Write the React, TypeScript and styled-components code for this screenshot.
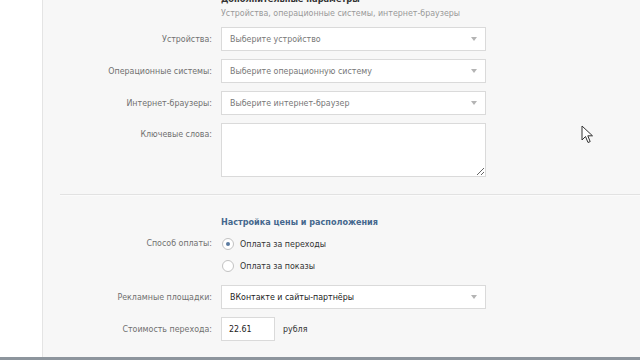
import React, { FC } from 'react';
import styled, { createGlobalStyle } from 'styled-components';

const GlobalStyle = createGlobalStyle`
  html, body {
    margin: 0;
    padding: 0;
    width: 640px;
    height: 360px;
    overflow: hidden;
    background: #ffffff;
  }
  body {
    font-family: 'DejaVu Sans Condensed', 'DejaVu Sans', sans-serif;
    font-size: 8.8px;
    color: #555;
  }
`;

const Screen = styled.div`
  display: flex;
  flex-direction: column;
  width: 640px;
  height: 360px;
`;

const Viewport = styled.div`
  flex: 1;
  display: flex;
  min-height: 0;
  overflow: hidden;
`;

const Gutter = styled.div`
  width: 42px;
  flex: none;
  background: #ffffff;
`;

const Panel = styled.div`
  position: relative;
  flex: 1;
  background: #f7f7f7;
  border-left: 1px solid #e4e4e4;
  overflow: hidden;
`;

const Content = styled.div`
  display: flex;
  flex-direction: column;
  margin-top: -8px;
`;

const Header = styled.div`
  display: flex;
  flex-direction: column;
  padding-left: 178px;
  margin-bottom: 7px;
  position: relative;
`;

const HeaderTitle = styled.div`
  font-weight: bold;
  color: #333;
  line-height: 14px;
  font-size: 9.2px;
`;

const Arrow = styled.span`
  position: absolute;
  left: 162px;
  top: 5px;
  width: 0;
  height: 0;
  border-left: 3px solid transparent;
  border-right: 3px solid transparent;
  border-top: 3px solid #777;
`;

const HeaderHint = styled.div`
  color: #999;
  line-height: 14px;
`;

const Row = styled.div<{ $gap?: number; $align?: 'center' | 'start' }>`
  display: grid;
  grid-template-columns: 169px 1fr;
  column-gap: 9px;
  align-items: ${(p) => (p.$align === 'start' ? 'start' : 'center')};
  margin-bottom: ${(p) => p.$gap ?? 8}px;
`;

const Label = styled.div<{ $top?: number }>`
  text-align: right;
  color: #707070;
  padding-top: ${(p) => p.$top ?? 0}px;
`;

const SelectBox = styled.div<{ $filled?: boolean }>`
  box-sizing: border-box;
  width: 265px;
  height: 24px;
  display: flex;
  align-items: center;
  justify-content: space-between;
  padding: 0 8px 0 8px;
  background: #ffffff;
  border: 1px solid #dadada;
  color: ${(p) => (p.$filled ? '#222' : '#777')};
`;

const Caret = styled.span`
  width: 0;
  height: 0;
  border-left: 3.5px solid transparent;
  border-right: 3.5px solid transparent;
  border-top: 4px solid #b4b4b4;
`;

const TextArea = styled.textarea`
  box-sizing: border-box;
  width: 265px;
  height: 54px;
  margin: 0;
  background: #ffffff;
  border: 1px solid #dadada;
  border-radius: 0;
  font: inherit;
  display: block;
`;

const Divider = styled.div`
  height: 1px;
  margin: 17px 0 19px 17px;
  background: #e2e2e2;
  border-bottom: 1px solid #fbfbfb;
`;

const SectionTitle = styled.div`
  padding-left: 178px;
  font-weight: bold;
  font-size: 9px;
  line-height: 14px;
  color: #45688e;
  margin-bottom: 4px;
`;

const RadioGroup = styled.div`
  display: flex;
  flex-direction: column;
`;

const RadioOption = styled.div`
  display: flex;
  align-items: center;
  height: 22px;
  gap: 6px;
  color: #333;
`;

const RadioCircle = styled.span<{ $checked?: boolean }>`
  box-sizing: border-box;
  width: 12px;
  height: 12px;
  margin-left: 1px;
  border-radius: 50%;
  border: 1px solid #c2c2c2;
  background: #fff;
  display: flex;
  align-items: center;
  justify-content: center;
  &::after {
    content: '';
    width: 4px;
    height: 4px;
    border-radius: 50%;
    background: ${(p) => (p.$checked ? '#5b7ba1' : 'transparent')};
  }
`;

const InlineField = styled.div`
  display: flex;
  align-items: center;
  gap: 8px;
  color: #333;
`;

const SmallInput = styled.div`
  box-sizing: border-box;
  width: 54px;
  height: 24px;
  display: flex;
  align-items: center;
  padding-left: 7px;
  background: #fff;
  border: 1px solid #dadada;
  color: #222;
`;

const BottomBar = styled.div`
  height: 3px;
  flex: none;
  background: #8d959d;
`;

const Cursor = styled.svg`
  position: absolute;
  left: 538px;
  top: 125px;
`;

const Select: FC<{ value: string; filled?: boolean }> = ({ value, filled }) => (
  <SelectBox $filled={filled}>
    <span>{value}</span>
    <Caret />
  </SelectBox>
);

const App: FC = () => (
  <Screen>
    <GlobalStyle />
    <Viewport>
      <Gutter />
      <Panel>
        <Content>
          <Header>
            <Arrow />
            <HeaderTitle>Дополнительные параметры</HeaderTitle>
            <HeaderHint>Устройства, операционные системы, интернет-браузеры</HeaderHint>
          </Header>

          <Row>
            <Label>Устройства:</Label>
            <Select value="Выберите устройство" />
          </Row>
          <Row>
            <Label>Операционные системы:</Label>
            <Select value="Выберите операционную систему" />
          </Row>
          <Row>
            <Label>Интернет-браузеры:</Label>
            <Select value="Выберите интернет-браузер" />
          </Row>
          <Row $align="start" $gap={0}>
            <Label $top={6}>Ключевые слова:</Label>
            <TextArea />
          </Row>

          <Divider />

          <SectionTitle>Настройка цены и расположения</SectionTitle>

          <Row $align="start">
            <Label $top={5}>Способ оплаты:</Label>
            <RadioGroup>
              <RadioOption>
                <RadioCircle $checked />
                Оплата за переходы
              </RadioOption>
              <RadioOption>
                <RadioCircle />
                Оплата за показы
              </RadioOption>
            </RadioGroup>
          </Row>
          <Row>
            <Label>Рекламные площадки:</Label>
            <Select value="ВКонтакте и сайты-партнёры" filled />
          </Row>
          <Row $gap={16}>
            <Label>Стоимость перехода:</Label>
            <InlineField>
              <SmallInput>22.61</SmallInput>
              рубля
            </InlineField>
          </Row>
          <Row>
            <Label />
            <Select value="" />
          </Row>
        </Content>
        <Cursor width="14" height="20" viewBox="0 0 14 20">
          <path
            d="M1 1 L1 15 L4.5 11.5 L7 17.5 L9.2 16.6 L6.8 10.8 L11.5 10.8 Z"
            fill="#ffffff"
            stroke="#333"
            strokeWidth="1"
            strokeLinejoin="round"
          />
        </Cursor>
      </Panel>
    </Viewport>
    <BottomBar />
  </Screen>
);

export default App;
